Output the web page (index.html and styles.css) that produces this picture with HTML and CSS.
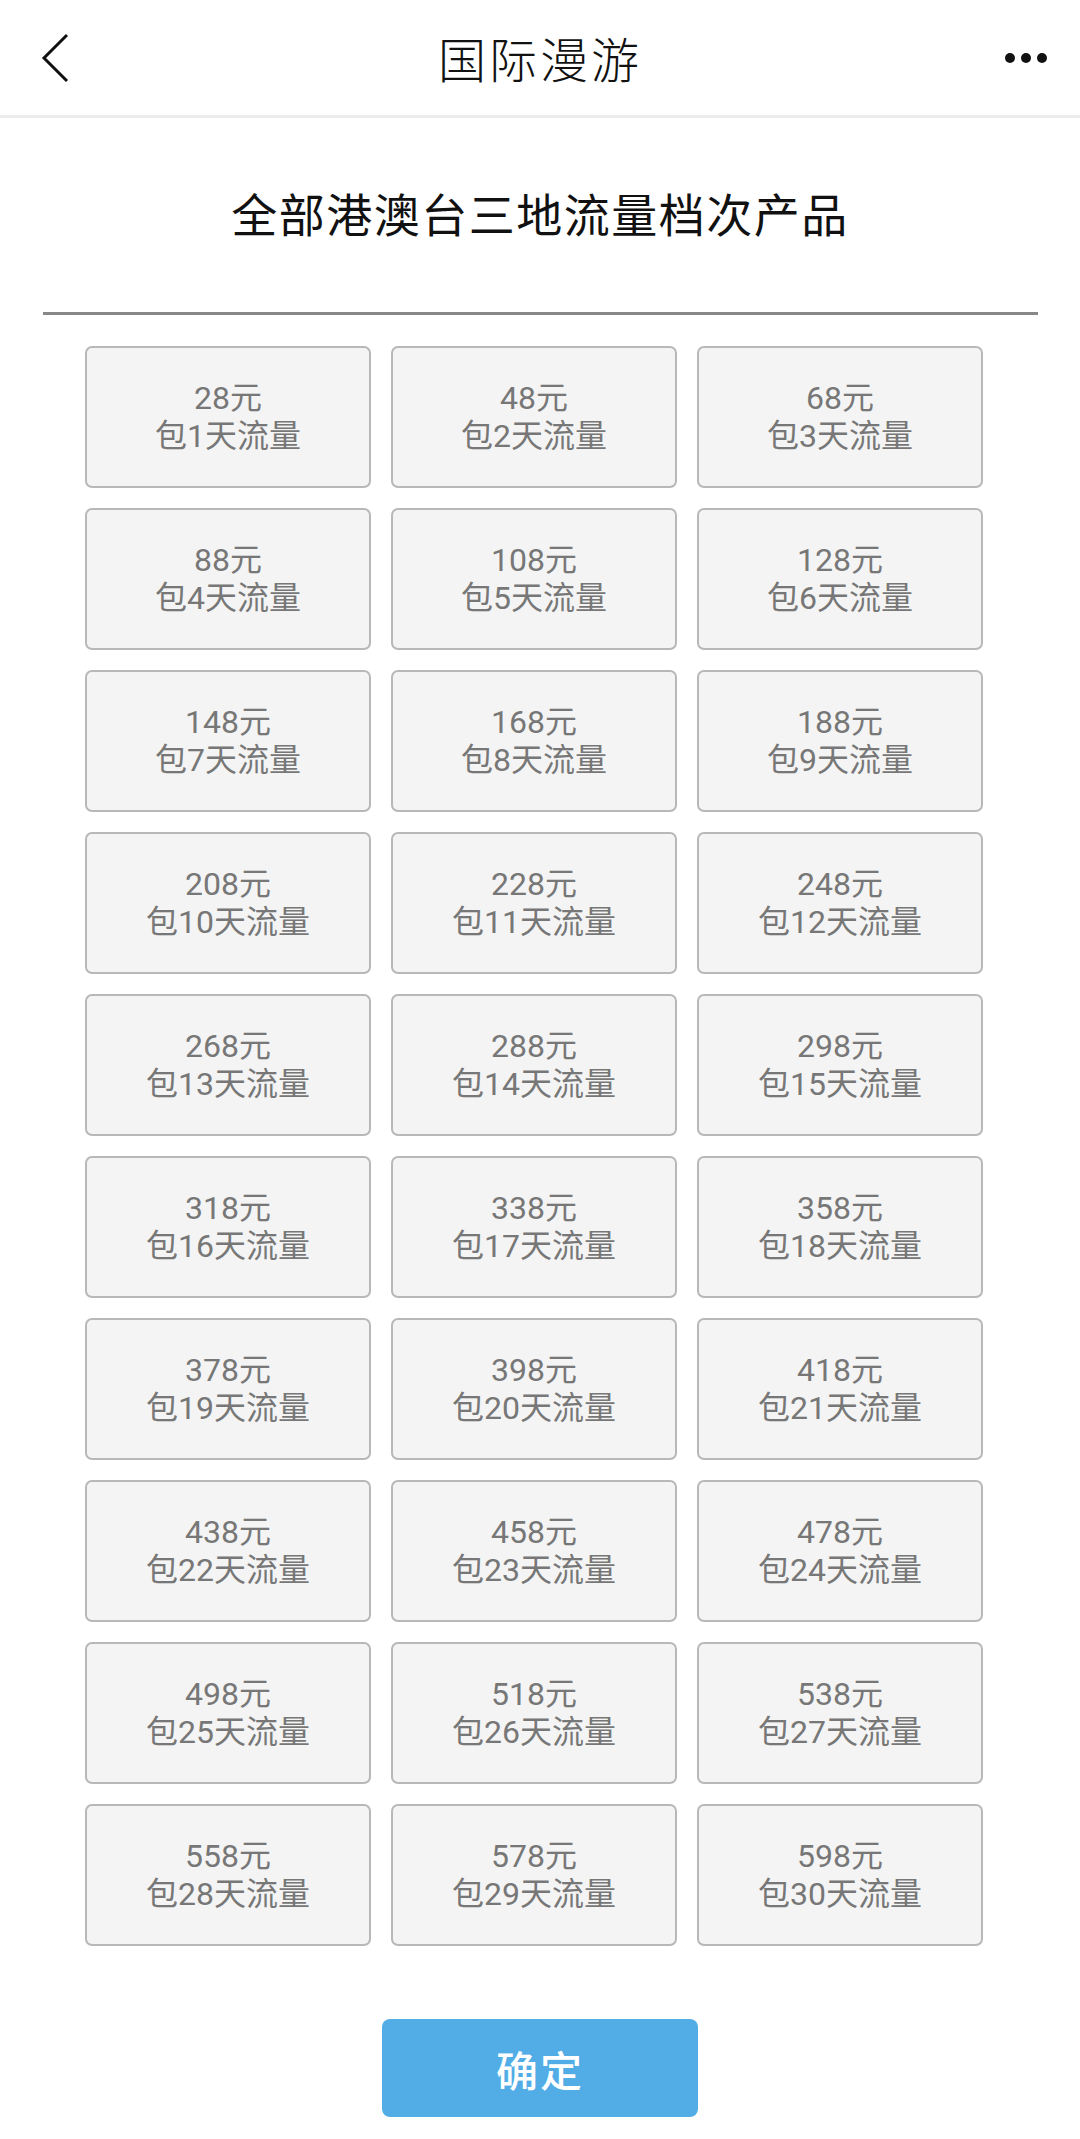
FILE: index.html
```html
<!DOCTYPE html>
<html lang="zh-CN">
<head>
  <meta charset="UTF-8" />
  <meta name="viewport" content="width=device-width, initial-scale=1.0"/>
  <title>国际漫游</title>
  <link rel="stylesheet" href="styles.css">
</head>
<body>

  <header class="top-bar">
    <svg class="back-icon" width="30" height="50" viewBox="0 0 30 50">
      <polyline points="26,2 3,25 26,48" fill="none" stroke="#111" stroke-width="3"/>
    </svg>
    <div class="top-title">国际漫游</div>
    <div class="more-icon"><span></span><span></span><span></span></div>
  </header>

  <h1 class="page-title">全部港澳台三地流量档次产品</h1>
  <div class="divider"></div>

  <div class="plan-grid" id="planGrid"></div>

  <div class="btn-wrap">
    <button class="confirm-btn">确定</button>
  </div>

  <script>
    const prices = [28, 48, 68, 88, 108, 128, 148, 168, 188, 208,
                    228, 248, 268, 288, 298, 318, 338, 358, 378, 398,
                    418, 438, 458, 478, 498, 518, 538, 558, 578, 598];
    const grid = document.getElementById('planGrid');

    for (let i = 0; i < prices.length; i++) {
      const card = document.createElement('div');
      card.className = 'plan-card';
      card.innerHTML = '<p>' + prices[i] + '元<br>包' + (i + 1) + '天流量</p>';
      grid.appendChild(card);
    }
  </script>
</body>
</html>
```

FILE: styles.css
```css
body {
  margin: 0;
  background: #fff;
  font-family: "Noto Sans CJK SC", "Noto Sans", sans-serif;
  color: #111;
}

.top-bar {
  height: 115px;
  border-bottom: 3px solid #ececec;
  display: flex;
  align-items: center;
  justify-content: space-between;
  padding: 0 33px 0 41px;
  position: relative;
}

.back-icon {
  display: block;
}

.top-title {
  position: absolute;
  left: 0;
  right: 0;
  text-align: center;
  font-size: 48px;
  font-weight: 300;
  letter-spacing: 3px;
  line-height: 115px;
  pointer-events: none;
}

.more-icon {
  display: flex;
  gap: 6px;
}

.more-icon span {
  width: 10px;
  height: 10px;
  border-radius: 50%;
  background: #111;
}

.page-title {
  margin: 64px 0 0;
  text-align: center;
  font-size: 46px;
  font-weight: 400;
  line-height: 60px;
  letter-spacing: 1.5px;
}

.divider {
  margin: 70px 42px 0 43px;
  height: 3px;
  background: #888;
}

.plan-grid {
  margin: 31px 0 0 85px;
  width: 898px;
  display: grid;
  grid-template-columns: repeat(3, 1fr);
  gap: 20px;
}

.plan-card {
  height: 142px;
  box-sizing: border-box;
  border: 2px solid #b8b8b8;
  border-radius: 7px;
  background: #f4f4f4;
  display: flex;
  justify-content: center;
  align-items: center;
  color: #777;
  font-family: Roboto, "Noto Sans CJK SC", sans-serif;
  font-size: 32px;
  line-height: 38px;
}

.plan-card p {
  margin: 0;
  text-align: center;
}

.btn-wrap {
  display: flex;
  justify-content: center;
  padding-top: 73px;
}

.confirm-btn {
  width: 316px;
  height: 98px;
  border: none;
  border-radius: 8px;
  background: #52ade6;
  color: #fff;
  font-family: inherit;
  font-size: 42px;
  font-weight: 500;
  letter-spacing: 2px;
}
```
